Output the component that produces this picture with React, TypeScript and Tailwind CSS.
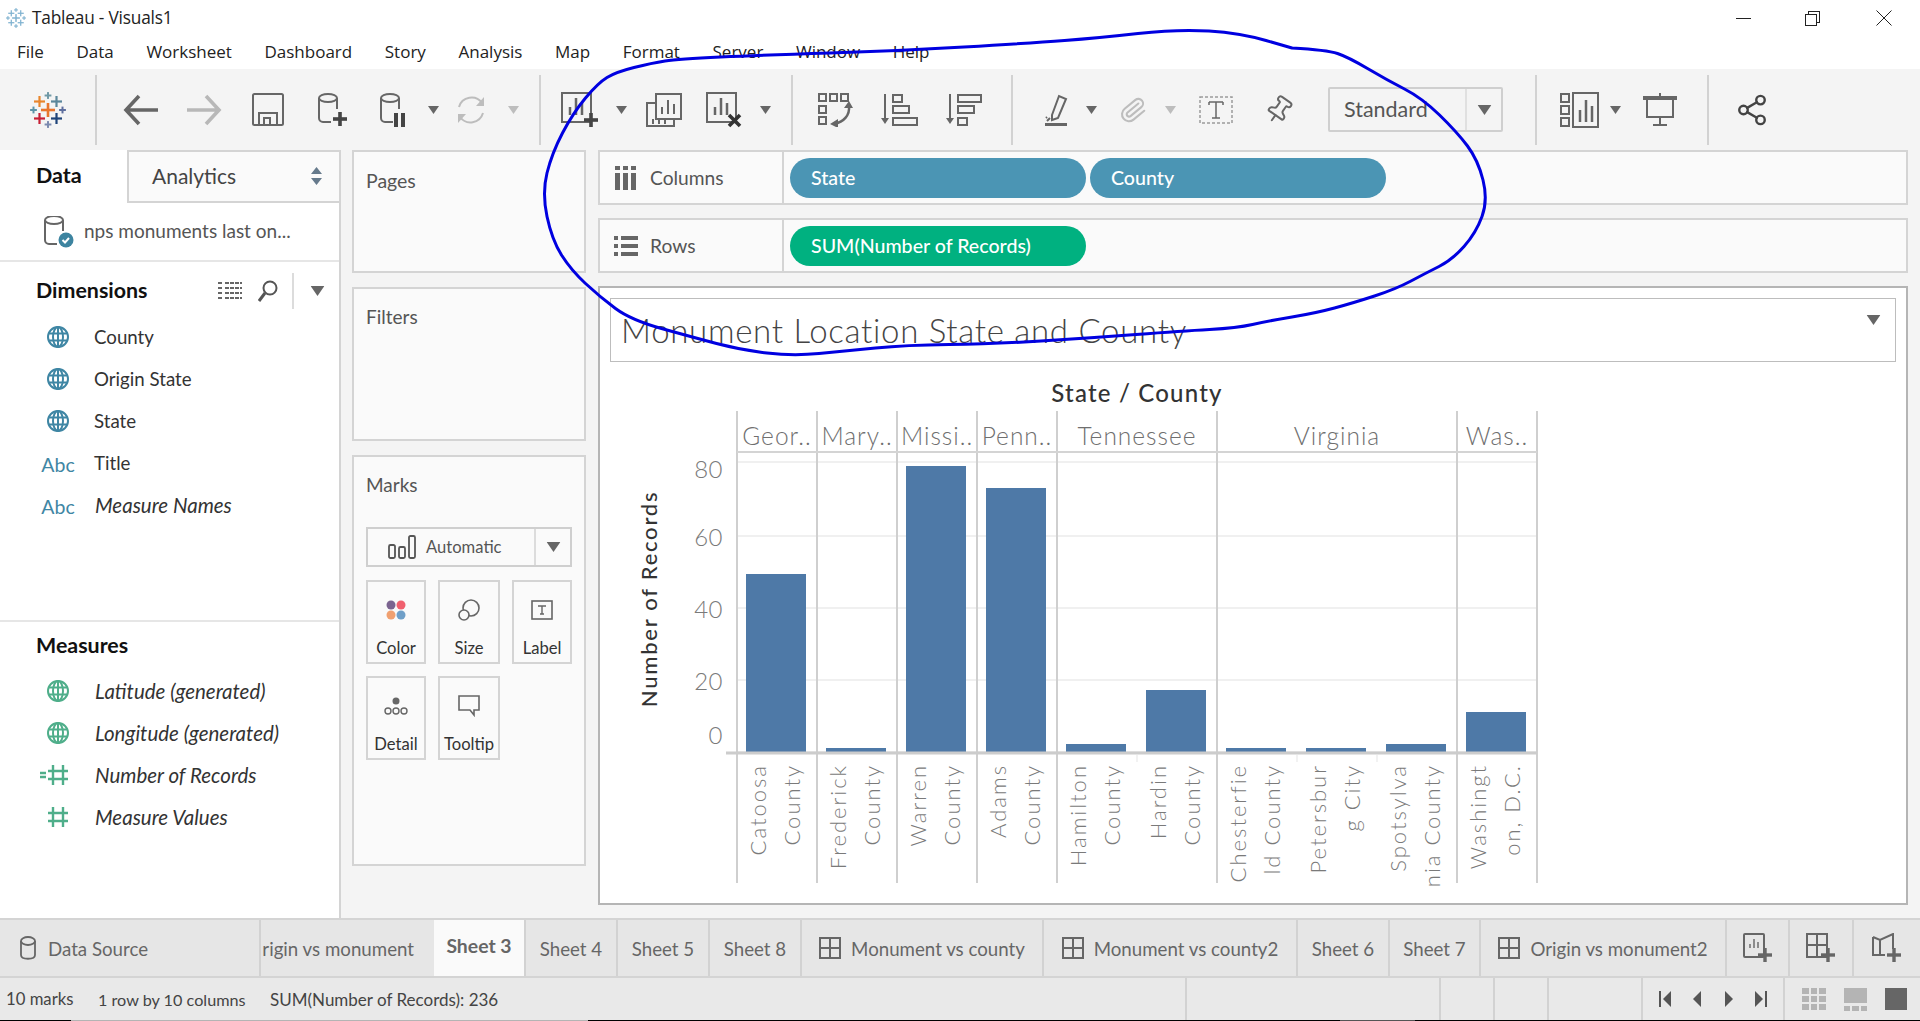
import { Paperclip, Pin, Share2 } from "lucide-react";
import type { ReactNode } from "react";

const GRAY = "#666666";

// pixel sized svg box, coordinates inside are plain pixels
function Ico({ w, h, children, stroke = GRAY, sw = 2 }: { w: number; h: number; children: ReactNode; stroke?: string; sw?: number }) {
  return (
    <svg width={w} height={h} viewBox={`0 0 ${w} ${h}`} fill="none" stroke={stroke} strokeWidth={sw} className="shrink-0 block">
      {children}
    </svg>
  );
}

function Caret({ light, className }: { light?: boolean; className: string }) {
  return (
    <svg width="11" height="8" viewBox="0 0 11 8" className={`shrink-0 block ${className}`}>
      <path d="M0 0h11L5.5 8z" fill={light ? "#bdbdbd" : GRAY} />
    </svg>
  );
}

function Sep({ className }: { className: string }) {
  return <div className={`w-[2px] h-[70px] bg-[#d2d2d2] shrink-0 ${className}`} />;
}

function Cross({ x, y, r, t, color }: { x: number; y: number; r: number; t: number; color: string }) {
  return (
    <g fill={color} stroke="none">
      <rect x={x - r} y={y - t / 2} width={r * 2} height={t} />
      <rect x={x - t / 2} y={y - r} width={t} height={r * 2} />
    </g>
  );
}

function Logo({ size, mono }: { size: number; mono?: boolean }) {
  const c = (v: string) => (mono ? "#7fb2d0" : v);
  return (
    <svg width={size} height={size} viewBox="0 0 36 36" className="shrink-0 block">
      <Cross x={18} y={18} r={7} t={2.6} color={c("#e8762d")} />
      <Cross x={9.5} y={9.5} r={5.5} t={2.2} color={c("#e8862d")} />
      <Cross x={26.5} y={9.5} r={5.5} t={2.2} color={c("#5b879b")} />
      <Cross x={9.5} y={26.5} r={5.5} t={2.2} color={c("#c72035")} />
      <Cross x={26.5} y={26.5} r={5.5} t={2.2} color={c("#1f447a")} />
      <Cross x={18} y={3.5} r={3.4} t={2} color={c("#7099a6")} />
      <Cross x={18} y={32.5} r={3.4} t={2} color={c("#7c8bb0")} />
      <Cross x={3.5} y={18} r={3.4} t={2} color={c("#5c94a8")} />
      <Cross x={32.5} y={18} r={3.4} t={2} color={c("#5e6f9e")} />
    </svg>
  );
}

function Cylinder({ x = 1, y = 5, color = GRAY }: { x?: number; y?: number; color?: string }) {
  return (
    <g stroke={color} transform={`translate(${x} ${y})`}>
      <ellipse cx="9" cy="3" rx="9" ry="4" />
      <path d="M0 3v20a4 4 0 0 0 4 4h8M18 3v11" />
    </g>
  );
}

function Globe({ color }: { color: string }) {
  return (
    <Ico w={24} h={24} stroke={color} sw={2}>
      <circle cx="12" cy="12" r="10" />
      <ellipse cx="12" cy="12" rx="5" ry="10" />
      <path d="M2.5 8.5h19M2.5 15.5h19M12 2v20" />
    </Ico>
  );
}

function Hash({ color, eq }: { color: string; eq?: boolean }) {
  return (
    <div className="relative -left-[4px]">
      <Ico w={28} h={24} stroke={color} sw={2.4}>
        {eq && <path d="M0 10h6M0 14h6" />}
        <path d="M8 8h20M8 16h20M13 2v20M23 2v20" />
      </Ico>
    </div>
  );
}

function AddSheet({ kind }: { kind: "sheet" | "dash" | "story" }) {
  return (
    <Ico w={30} h={30}>
      {kind === "sheet" && (
        <>
          <rect x="1" y="1" width="20" height="23" rx="1" />
          <path d="M7 15v-4M11 15V6M15 15v-6" strokeWidth="1.400" />
        </>
      )}
      {kind === "dash" && (
        <path d="M1 1h20v23H1zM1 12h20M11 1v23" />
      )}
      {kind === "story" && <path d="M1 4l7 3 13-6v15M1 4v18h12M8 7v15" />}
      <Cross x={22} y={22} r={7} t={3.4} color={GRAY} />
    </Ico>
  );
}

function Toolbar() {
  return (
    <div className="h-[81px] bg-[#f4f4f4] flex items-center shrink-0">
      <div className="ml-[30px]"><Logo size={36} /></div>
      <Sep className="ml-[29px]" />
      <div className="ml-[26px]">
        <Ico w={35} h={32} sw={3.6}><path d="M16 2L3 16l13 14M3 16h32" /></Ico>
      </div>
      <div className="ml-[29px]">
        <Ico w={35} h={32} sw={3.6} stroke="#b8b8b8"><path d="M19 2l13 14-13 14M32 16H0" /></Ico>
      </div>
      <div className="ml-[30px]">
        <Ico w={32} h={33}>
          <rect x="1" y="1" width="30" height="31" rx="1.500" />
          <path d="M7 32V20h18v12M12 32v-7h6v7" />
        </Ico>
      </div>
      <div className="ml-[34px]">
        <Ico w={30} h={34}>
          <Cylinder y={2} />
          <Cross x={22} y={26} r={7} t={3.6} color="#444444" />
        </Ico>
      </div>
      <div className="ml-[32px]">
        <Ico w={26} h={34}>
          <Cylinder y={2} />
          <rect x="14" y="20" width="4" height="14" fill="#444444" stroke="none" />
          <rect x="21" y="20" width="4" height="14" fill="#444444" stroke="none" />
        </Ico>
      </div>
      <Caret className="ml-[22px]" />
      <div className="ml-[16px]">
        <Ico w={32} h={32} stroke="#bdbdbd">
          <path d="M4 13A13 13 0 0 1 27 9M28 19A13 13 0 0 1 5 23" />
          <path d="M29 3v9h-8z" fill="#bdbdbd" stroke="none" />
          <path d="M3 29v-9h8z" fill="#bdbdbd" stroke="none" />
        </Ico>
      </div>
      <Caret light className="ml-[21px]" />
      <Sep className="ml-[20px]" />
      <div className="ml-[20px]">
        <Ico w={38} h={36}>
          <rect x="1" y="1" width="29" height="29" />
          <path d="M9 23v-8M15 23V6M21 23V11" strokeWidth="2.500" />
          <Cross x={30} y={28} r={7} t={3.6} color="#444444" />
        </Ico>
      </div>
      <Caret className="ml-[17px]" />
      <div className="ml-[19px]">
        <Ico w={36} h={34}>
          <path d="M10 10H1v23h27v-7" />
          <rect x="10" y="1" width="25" height="25" fill="#f4f4f4" />
          <path d="M16 21v-7M22 21V7M28 21V11M7 31v-5M13 31v-5M19 31v-5" strokeWidth="2" />
        </Ico>
      </div>
      <div className="ml-[24px]">
        <Ico w={37} h={36}>
          <rect x="1" y="1" width="29" height="29" />
          <path d="M9 23v-8M15 23V6M21 23V11" strokeWidth="2.500" />
          <path d="M23 23l11 11M34 23L23 34" stroke="#333333" strokeWidth="3.600" />
        </Ico>
      </div>
      <Caret className="ml-[17px]" />
      <Sep className="ml-[20px]" />
      <div className="ml-[25px]">
        <Ico w={36} h={34}>
          <rect x="1" y="1" width="7" height="7" />
          <rect x="12" y="1" width="7" height="7" />
          <rect x="23" y="1" width="7" height="7" />
          <rect x="1" y="13" width="7" height="7" />
          <rect x="1" y="24" width="7" height="7" />
          <path d="M31 13c1 9-5 16-15 18" strokeWidth="2.500" />
          <path d="M31 8l-5 7h9zM12 31l8-5v9z" fill={GRAY} stroke="none" />
        </Ico>
      </div>
      <div className="ml-[27px]">
        <Ico w={37} h={32}>
          <path d="M4 0v27" />
          <path d="M0 24h8l-4 6z" fill={GRAY} stroke="none" />
          <rect x="12" y="1" width="9" height="7" />
          <rect x="12" y="12" width="16" height="7" />
          <rect x="12" y="24" width="24" height="7" />
        </Ico>
      </div>
      <div className="ml-[28px]">
        <Ico w={36} h={32}>
          <path d="M4 0v27" />
          <path d="M0 24h8l-4 6z" fill={GRAY} stroke="none" />
          <rect x="12" y="1" width="23" height="7" />
          <rect x="12" y="12" width="16" height="7" />
          <rect x="12" y="24" width="9" height="7" />
        </Ico>
      </div>
      <Sep className="ml-[29px]" />
      <div className="ml-[32px]">
        <Ico w={23} h={34}>
          <path d="M7 22L14 3l7 3-8 19-6 2z" />
          <path d="M5 25l-3 3M2 24l-1 1" />
          <rect x="0" y="30" width="22" height="3" fill={GRAY} stroke="none" />
        </Ico>
      </div>
      <Caret className="ml-[18px]" />
      <Paperclip className="ml-[22px] shrink-0 rotate-[6deg]" size={28} color="#bdbdbd" strokeWidth={1.8} />
      <Caret light className="ml-[18px]" />
      <div className="ml-[23px]">
        <Ico w={34} h={28} sw={1.500} stroke="#9a9a9a">
          <rect x="1" y="1" width="32" height="26" strokeDasharray="3 2" />
          <path d="M10 6h14M17 6v16M13 22h8M10 6v3M24 6v3" stroke="#666666" />
        </Ico>
      </div>
      <Pin className="ml-[31px] shrink-0 rotate-[35deg]" size={30} color={GRAY} strokeWidth={1.6} />
      <div className="ml-[34px] w-[175px] h-[45px] border-2 border-[#cfcfcf] rounded-[2px] flex items-center shrink-0">
        <span className="flex-1 pl-[14px] text-[21.500px] text-[#555555]">Standard</span>
        <div className="w-[36px] h-full border-l-2 border-[#e0e0e0] flex items-center justify-center">
          <Caret className="scale-125" />
        </div>
      </div>
      <Sep className="ml-[32px]" />
      <div className="ml-[23px]">
        <Ico w={40} h={36}>
          <rect x="1" y="2" width="8" height="8" />
          <rect x="1" y="14" width="8" height="8" />
          <rect x="1" y="26" width="8" height="8" />
          <rect x="13" y="1" width="25" height="34" />
          <path d="M20 30V18M26 30V8M32 30V14" strokeWidth="2.500" />
        </Ico>
      </div>
      <Caret className="ml-[10px]" />
      <div className="ml-[22px]">
        <Ico w={34} h={34}>
          <path d="M17 0v5" />
          <rect x="0" y="3" width="34" height="4" fill={GRAY} stroke="none" />
          <path d="M4 6v18h26V6M17 24v8M10 32h14" />
        </Ico>
      </div>
      <Sep className="ml-[30px]" />
      <Share2 className="ml-[26px] shrink-0" size={34} color="#444444" strokeWidth={1.7} />
    </div>
  );
}

function FieldRow({ icon, label, italic }: { icon: ReactNode; label: string; italic?: boolean }) {
  return (
    <div className="h-[42px] flex items-center">
      <div className="w-[94px] pl-[40px] flex items-center justify-center shrink-0 pr-[18px]">{icon}</div>
      <span className={italic ? "text-[20.500px] italic text-[#333333] ml-[1px]" : "text-[18.700px] text-[#333333]"}>{label}</span>
    </div>
  );
}

const abc = <span className="text-[19.500px] text-[#3f86a4] relative top-[2px]">Abc</span>;

function DataPane() {
  return (
    <div className="w-[341px] shrink-0 bg-white border-r-2 border-[#d4d4d4] flex flex-col">
      <div className="flex h-[53px] shrink-0">
        <div className="w-[127px] pl-[36px] pb-[2px] flex items-center font-bold text-[21.500px] text-[#111111]">Data</div>
        <div className="flex-1 bg-[#fafafa] border-t-2 border-l-2 border-b-2 border-[#d4d4d4] pl-[23px] pb-[2px] flex items-center justify-between pr-[17px] text-[21px] text-[#444444]">
          Analytics
          <svg width="11" height="18" viewBox="0 0 11 18"><path d="M0 7l5.500-7L11 7zM0 11l5.500 7L11 11z" fill="#667a8c" /></svg>
        </div>
      </div>
      <div className="h-[59px] shrink-0 border-b-2 border-[#e6e6e6] flex items-center pl-[44px] gap-[10px]">
        <Ico w={30} h={32} stroke="#666666">
          <Cylinder x={1} y={1} />
          <circle cx="22" cy="24" r="7.500" fill="#3d84a0" stroke="none" />
          <path d="M18.500 24l2.500 2.500 4-4.500" stroke="#ffffff" />
        </Ico>
        <span className="text-[19px] text-[#555555]">nps monuments last on...</span>
      </div>
      <div className="h-[360px] shrink-0 border-b-2 border-[#e6e6e6]">
        <div className="h-[54px] flex items-center pl-[36px] pt-[3px]">
          <span className="font-bold text-[21.400px] text-[#111111] w-[182px]">Dimensions</span>
          <Ico w={24} h={20} stroke="#666666" sw={2}>
            <path d="M0 2h5M7 2h17M0 7h5M7 7h17M0 12h5M7 12h17M0 17h5M7 17h17" strokeDasharray="4 1" />
          </Ico>
          <div className="ml-[16px]">
            <Ico w={20} h={22} stroke="#555555">
              <circle cx="12" cy="8" r="6.500" />
              <path d="M7 13l-6 8" strokeWidth="3" />
            </Ico>
          </div>
          <div className="ml-[14px] w-[2px] h-[36px] bg-[#dcdcdc]" />
          <Caret className="ml-[18px] scale-125" />
        </div>
        <FieldRow icon={<Globe color="#3f86a4" />} label="County" />
        <FieldRow icon={<Globe color="#3f86a4" />} label="Origin State" />
        <FieldRow icon={<Globe color="#3f86a4" />} label="State" />
        <FieldRow icon={abc} label="Title" />
        <FieldRow icon={abc} label="Measure Names" italic />
      </div>
      <div className="h-[46px] flex items-center pl-[36px] font-bold text-[21.400px] text-[#111111]">Measures</div>
      <div className="pt-[2px]">
        <FieldRow icon={<Globe color="#4fae8a" />} label="Latitude (generated)" italic />
        <FieldRow icon={<Globe color="#4fae8a" />} label="Longitude (generated)" italic />
        <FieldRow icon={<Hash color="#4fae8a" eq />} label="Number of Records" italic />
        <FieldRow icon={<Hash color="#4fae8a" />} label="Measure Values" italic />
      </div>
    </div>
  );
}

function MarkButton({ label, icon, width }: { label: string; icon: ReactNode; width: string }) {
  return (
    <div className={`${width} h-[84px] border-2 border-[#d4d4d4] flex flex-col items-center shrink-0`}>
      <div className="h-[56px] flex items-center justify-center">{icon}</div>
      <span className="text-[16.600px] text-[#333333] leading-[20px]">{label}</span>
    </div>
  );
}

function CardsColumn() {
  return (
    <div className="ml-[11px] w-[234px] shrink-0 flex flex-col gap-[14px]">
      <div className="h-[123px] shrink-0 bg-[#fafafa] border-2 border-[#d4d4d4] px-[12px] pt-[17px] text-[19.500px] leading-[24px] text-[#555555]">Pages</div>
      <div className="h-[154px] shrink-0 bg-[#fafafa] border-2 border-[#d4d4d4] px-[12px] pt-[16px] text-[19px] leading-[24px] text-[#555555]">Filters</div>
      <div className="h-[411px] shrink-0 bg-[#fafafa] border-2 border-[#d4d4d4] px-[12px] pt-[16px]">
        <div className="text-[19px] leading-[24px] text-[#555555]">Marks</div>
        <div className="mt-[30px] w-[206px] h-[40px] border-2 border-[#cfcfcf] flex items-center">
          <div className="flex-1 flex items-center pl-[20px] gap-[10px]">
            <Ico w={28} h={24} sw={1.800} stroke="#555555">
              <rect x="1" y="10" width="6" height="13" rx="1.500" />
              <rect x="11" y="12" width="6" height="11" rx="1.500" />
              <rect x="21" y="1" width="6" height="22" rx="1.500" />
            </Ico>
            <span className="text-[16.600px] text-[#555555]">Automatic</span>
          </div>
          <div className="w-[36px] h-full border-l-2 border-[#dcdcdc] flex items-center justify-center">
            <Caret className="scale-125" />
          </div>
        </div>
        <div className="mt-[13px] flex gap-[12px]">
          <MarkButton width="w-[60px]" label="Color" icon={
            <Ico w={20} h={20} sw={0}>
              <circle cx="5" cy="5" r="4.500" fill="#7b6490" />
              <circle cx="15" cy="5" r="4.500" fill="#f0606e" />
              <circle cx="5" cy="15" r="4.500" fill="#f0a070" />
              <circle cx="15" cy="15" r="4.500" fill="#6f9fc8" />
            </Ico>
          } />
          <MarkButton width="w-[62px]" label="Size" icon={
            <Ico w={22} h={22} sw={1.600} stroke="#666666">
              <circle cx="13" cy="9" r="8" />
              <circle cx="6" cy="16" r="5" fill="#fafafa" />
            </Ico>
          } />
          <MarkButton width="w-[60px]" label="Label" icon={
            <Ico w={22} h={20} sw={1.600} stroke="#666666">
              <rect x="1" y="1" width="20" height="18" />
              <path d="M7 6h8M11 6v8M9 14h4" strokeWidth="1.400" />
            </Ico>
          } />
        </div>
        <div className="mt-[12px] flex gap-[12px]">
          <MarkButton width="w-[60px]" label="Detail" icon={
            <Ico w={24} h={20} sw={1.400} stroke="#666666">
              <circle cx="12" cy="5" r="3.500" fill="#666666" stroke="none" />
              <circle cx="4" cy="15" r="3" />
              <circle cx="12" cy="15" r="3" />
              <circle cx="20" cy="15" r="3" />
            </Ico>
          } />
          <MarkButton width="w-[62px]" label="Tooltip" icon={
            <Ico w={22} h={22} sw={1.600} stroke="#666666">
              <path d="M1 1h20v14h-5v5l-4-5H1z" />
            </Ico>
          } />
        </div>
      </div>
    </div>
  );
}

function Shelf({ icon, label, children }: { icon: ReactNode; label: string; children: ReactNode }) {
  return (
    <div className="h-[55px] shrink-0 bg-[#fafafa] border-2 border-[#d4d4d4] flex">
      <div className="w-[184px] shrink-0 border-r-2 border-[#d4d4d4] flex items-center pl-[14px] gap-[12px]">
        <div className="w-[24px] flex justify-center">{icon}</div>
        <span className="text-[19.200px] text-[#555555] relative top-[1px]">{label}</span>
      </div>
      <div className="flex items-center pl-[6px] gap-[4px]">{children}</div>
    </div>
  );
}

function Pill({ label, green }: { label: string; green?: boolean }) {
  return (
    <div className={`w-[296px] h-[40px] rounded-[20px] flex items-center pl-[21px] text-[19.600px] font-medium text-white ${green ? "bg-[#00b180]" : "bg-[#4b95b4]"}`}>
      {label}
    </div>
  );
}

const cells = [
  { x: 737, w: 80, label: "Geor.." },
  { x: 817, w: 80, label: "Mary.." },
  { x: 897, w: 80, label: "Missi.." },
  { x: 977, w: 80, label: "Penn.." },
  { x: 1057, w: 160, label: "Tennessee" },
  { x: 1217, w: 240, label: "Virginia" },
  { x: 1457, w: 80, label: "Was.." },
];

const bars = [
  { top: 574, a: "Catoosa", b: "County" },
  { top: 748, a: "Frederick", b: "County" },
  { top: 466, a: "Warren", b: "County" },
  { top: 488, a: "Adams", b: "County" },
  { top: 744, a: "Hamilton", b: "County" },
  { top: 690, a: "Hardin", b: "County" },
  { top: 748, a: "Chesterfie", b: "ld County" },
  { top: 748, a: "Petersbur", b: "g City" },
  { top: 744, a: "Spotsylva", b: "nia County" },
  { top: 712, a: "Washingt", b: "on, D.C." },
];

const dividers = [737, 817, 897, 977, 1057, 1217, 1457, 1537];
const axis = [
  { v: "80", grid: 462, y: 478 },
  { v: "60", grid: 536, y: 546 },
  { v: "40", grid: 608, y: 618 },
  { v: "20", grid: 680, y: 690 },
  { v: "0", grid: 752, y: 744 },
];

// drawn in page pixels, the viewBox starts where the svg sits on the page
function Chart() {
  return (
    <svg width="1306" height="538" viewBox="600 364 1306 538" className="block font-['Lato',sans-serif]">
      <text x="1137" y="402" textAnchor="middle" fontSize="24" fontWeight="500" fill="#333333" letterSpacing="1.200">State / County</text>
      <text transform="translate(657 599) rotate(-90)" textAnchor="middle" fontSize="22" fontWeight="500" fill="#333333" letterSpacing="1.750">Number of Records</text>
      {axis.map((a) => (
        <g key={a.v}>
          <line x1="737" x2="1537" y1={a.grid} y2={a.grid} stroke="#f0f0f0" strokeWidth="2" />
          <text x="723" y={a.y} textAnchor="end" fontSize="24" fontWeight="300" fill="#7a7a7a" letterSpacing="0.500">{a.v}</text>
        </g>
      ))}
      {dividers.map((x) => (
        <line key={x} x1={x} x2={x} y1="411" y2="883" stroke="#cfcfcf" strokeWidth="2" />
      ))}
      <line x1="737" x2="1537" y1="452" y2="452" stroke="#d4d4d4" strokeWidth="2" />
      {cells.map((c) => (
        <text key={c.label} x={c.x + c.w / 2} y="445" textAnchor="middle" fontSize="24.500" fontWeight="300" fill="#6f6f6f" letterSpacing="1">{c.label}</text>
      ))}
      {bars.map((b, i) => {
        const x = 737 + i * 80;
        return (
          <g key={b.a}>
            <rect x={x + 9} y={b.top} width="60" height={752 - b.top} fill="#4e79a7" />
            <text transform={`translate(${x + 29} 764) rotate(-90)`} textAnchor="end" fontSize="22" fontWeight="300" fill="#7a7a7a" letterSpacing="2">{b.a}</text>
            <text transform={`translate(${x + 63} 764) rotate(-90)`} textAnchor="end" fontSize="22" fontWeight="300" fill="#7a7a7a" letterSpacing="2">{b.b}</text>
          </g>
        );
      })}
      <line x1="726" x2="1537" y1="753" y2="753" stroke="#cccccc" strokeWidth="3" />
      {[1137, 1297, 1377].map((x) => (
        <line key={x} x1={x} x2={x} y1="755" y2="762" stroke="#eeeeee" strokeWidth="1.500" />
      ))}
    </svg>
  );
}

function ViewColumn() {
  return (
    <div className="ml-[12px] w-[1310px] shrink-0 flex flex-col">
      <Shelf label="Columns" icon={
        <Ico w={22} h={24} stroke="#666666" sw={0}>
          <g fill="#666666">
            <rect x="0" y="0" width="5" height="4" />
            <rect x="8" y="0" width="5" height="4" />
            <rect x="16" y="0" width="5" height="4" />
            <rect x="0" y="7" width="5" height="17" />
            <rect x="8" y="7" width="5" height="17" />
            <rect x="16" y="7" width="5" height="17" />
          </g>
        </Ico>
      }>
        <Pill label="State" />
        <Pill label="County" />
      </Shelf>
      <div className="h-[13px] shrink-0" />
      <Shelf label="Rows" icon={
        <Ico w={24} h={20} sw={0}>
          <g fill="#666666">
            <rect x="0" y="0" width="4" height="4" />
            <rect x="7" y="0" width="17" height="4" />
            <rect x="0" y="8" width="4" height="4" />
            <rect x="7" y="8" width="17" height="4" />
            <rect x="0" y="16" width="4" height="4" />
            <rect x="7" y="16" width="17" height="4" />
          </g>
        </Ico>
      }>
        <Pill label="SUM(Number of Records)" green />
      </Shelf>
      <div className="h-[13px] shrink-0" />
      <div className="h-[619px] shrink-0 bg-white border-2 border-[#b5b5b5] pt-[10px] pl-[10px]">
        <div className="w-[1286px] h-[64px] border border-[#bdbdbd] flex items-center justify-between pl-[10px] pr-[16px]">
          <span className="text-[33px] font-light tracking-[0.700px] text-[#444444] relative top-[1px]">Monument Location State and County</span>
          <Caret className="scale-125 relative top-[-10px]" />
        </div>
        <div className="-ml-[10px] mt-[2px]"><Chart /></div>
      </div>
    </div>
  );
}

function Tab({ width, label, active, dash, children }: { width: string; label?: string; active?: boolean; dash?: boolean; children?: ReactNode }) {
  return (
    <div className={`${width} shrink-0 h-full flex items-center justify-center gap-[10px] border-r-2 border-[#d2d2d2] text-[#666666] ${active ? "bg-[#fafafa] font-bold text-[19.400px]" : "text-[18.700px]"}`}>
      {dash && (
        <Ico w={22} h={22} stroke="#666666">
          <path d="M1 1h20v20H1zM1 11h20M11 1v20" />
        </Ico>
      )}
      {label && <span className={active ? "relative top-[-2px]" : "relative top-[1px]"}>{label}</span>}
      {children}
    </div>
  );
}

function NavArrow({ d }: { d: string }) {
  return (
    <svg width="12" height="16" viewBox="0 0 12 16" className="shrink-0 block"><path d={d} fill="#555555" /></svg>
  );
}

function Bottom() {
  return (
    <>
      <div className="h-[60px] shrink-0 bg-[#e6e6e6] border-t-2 border-[#d4d4d4] border-b-2 flex">
        <div className="w-[261px] shrink-0 h-full border-r-2 border-[#d2d2d2] flex items-center pl-[20px] gap-[12px] text-[18.700px] text-[#666666]">
          <Ico w={16} h={24} sw={1.800}>
            <ellipse cx="8" cy="5" rx="7" ry="4" />
            <path d="M1 5v14c0 5 14 5 14 0V5" />
          </Ico>
          <span className="relative top-[1px]">Data Source</span>
        </div>
        <div className="w-[173px] shrink-0 h-full overflow-hidden flex items-center justify-end pr-[20px] text-[18.700px] text-[#666666]">
          <span className="whitespace-nowrap relative top-[1px]">rigin vs monument</span>
        </div>
        <Tab width="w-[92px]" label="Sheet 3" active />
        <Tab width="w-[92px]" label="Sheet 4" />
        <Tab width="w-[92px]" label="Sheet 5" />
        <Tab width="w-[92px]" label="Sheet 8" />
        <Tab width="w-[242px]" label="Monument vs county" dash />
        <Tab width="w-[254px]" label="Monument vs county2" dash />
        <Tab width="w-[92px]" label="Sheet 6" />
        <Tab width="w-[91px]" label="Sheet 7" />
        <Tab width="w-[246px]" label="Origin vs monument2" dash />
        <Tab width="w-[63px]"><AddSheet kind="sheet" /></Tab>
        <Tab width="w-[64px]"><AddSheet kind="dash" /></Tab>
        <div className="flex-1 flex items-center justify-center"><AddSheet kind="story" /></div>
      </div>
      <div className="h-[42px] shrink-0 bg-[#e9e9e9] flex items-center text-[16.700px] text-[#444444]">
        <div className="w-[1187px] flex items-center pl-[6px] pt-[2px] shrink-0 h-full border-r-2 border-[#d2d2d2]">
          <span className="w-[92px]">10 marks</span>
          <span className="w-[172px] text-[16.200px]">1 row by 10 columns</span>
          <span className="text-[17px]">SUM(Number of Records): 236</span>
        </div>
        <div className="w-[254px] shrink-0 h-full border-r-2 border-[#d2d2d2]" />
        <div className="w-[54px] shrink-0 h-full border-r-2 border-[#d2d2d2]" />
        <div className="w-[54px] shrink-0 h-full border-r-2 border-[#d2d2d2]" />
        <div className="w-[94px] shrink-0 h-full border-r-2 border-[#d2d2d2]" />
        <div className="w-[142px] shrink-0 h-full border-r-2 border-[#d2d2d2] flex items-center pl-[16px] gap-[20px]">
          <NavArrow d="M0 0h2v16H0zM12 0v16L4 8z" />
          <NavArrow d="M10 0v16L2 8z" />
          <NavArrow d="M2 0v16l8-8z" />
          <NavArrow d="M0 0v16l8-8zM10 0h2v16h-2z" />
        </div>
        <div className="flex-1 flex items-center pl-[17px] gap-[18px]">
          <div className="grid grid-cols-3 gap-[2px] w-[24px]">
            {Array.from({ length: 9 }).map((_, i) => (
              <div key={i} className="h-[6px] bg-[#b4b4b4]" />
            ))}
          </div>
          <div className="w-[23px] flex flex-col gap-[3px]">
            <div className="h-[15px] bg-[#b4b4b4]" />
            <div className="grid grid-cols-3 gap-[2px]">
              <div className="h-[5px] bg-[#b4b4b4]" />
              <div className="h-[5px] bg-[#b4b4b4]" />
              <div className="h-[5px] bg-[#b4b4b4]" />
            </div>
          </div>
          <div className="w-[22px] h-[22px] bg-[#666666]" />
        </div>
      </div>
      {/* window edge left in the screenshot, part black, part taskbar gray */}
      <div className="h-[1px] shrink-0 flex">
        <div className="w-[71px] bg-black" />
        <div className="w-[517px] bg-[#b4b4b4]" />
        <div className="w-[752px] bg-black" />
        <div className="w-[75px] bg-[#555555]" />
        <div className="flex-1 bg-black" />
      </div>
    </>
  );
}

// the pen circle someone drew over the screenshot, page pixels
const scribble: [number, number][] = [
  [1292, 48], [1327, 50], [1348, 57], [1387, 80], [1422, 98], [1457, 132], [1478, 160], [1488, 200],
  [1476, 233], [1452, 260], [1426, 273], [1396, 289], [1353, 303], [1316, 313], [1268, 321], [1237, 328],
  [1182, 331], [1090, 338], [992, 344], [906, 345], [845, 351], [793, 356], [741, 350], [692, 337],
  [631, 320], [600, 297], [571, 270], [552, 240], [542, 193], [552, 153], [573, 113], [598, 83],
  [616, 72], [652, 63], [678, 59], [763, 55], [897, 51], [1031, 43], [1098, 38], [1178, 29], [1240, 33], [1292, 48],
];

function smooth(pts: [number, number][]) {
  let d = `M${pts[0][0]} ${pts[0][1]}`;
  for (let i = 1; i < pts.length - 1; i++) {
    const mx = (pts[i][0] + pts[i + 1][0]) / 2;
    const my = (pts[i][1] + pts[i + 1][1]) / 2;
    d += ` Q${pts[i][0]} ${pts[i][1]} ${mx} ${my}`;
  }
  const last = pts[pts.length - 1];
  return d + ` L${last[0]} ${last[1]}`;
}

export default function App() {
  return (
    <div className="relative w-[1920px] h-[1021px] overflow-hidden flex flex-col bg-white font-['Lato',sans-serif]">
      <div className="h-[36px] shrink-0 flex items-center pl-[6px] gap-[6px]">
        <Logo size={20} mono />
        <span className="text-[17.300px] text-[#222222] font-['Open_Sans',sans-serif] tracking-[-0.2px]">Tableau - Visuals1</span>
        <div className="ml-auto flex items-center">
          <div className="w-[15px] h-[1px] bg-[#222222]" />
          <div className="ml-[54px] relative w-[15px] h-[15px]">
            <div className="absolute left-[3px] top-0 w-[12px] h-[12px] border border-[#222222]" />
            <div className="absolute left-0 top-[3px] w-[12px] h-[12px] border border-[#222222] bg-white" />
          </div>
          <svg width="16" height="16" viewBox="0 0 16 16" className="ml-[56px] mr-[28px]">
            <path d="M0.500 0.500l15 15M15.500 0.500l-15 15" stroke="#222222" />
          </svg>
        </div>
      </div>
      <div className="h-[33px] shrink-0 flex items-center pl-[17px] pb-[1px] gap-[32.600px] text-[17px] text-[#222222] font-['Open_Sans',sans-serif]">
        {["File", "Data", "Worksheet", "Dashboard", "Story", "Analysis", "Map", "Format", "Server", "Window", "Help"].map((m) => (
          <span key={m}>{m}</span>
        ))}
      </div>
      <Toolbar />
      <div className="h-[768px] shrink-0 bg-[#f4f4f4] flex">
        <DataPane />
        <CardsColumn />
        <ViewColumn />
      </div>
      <Bottom />
      <svg width="1920" height="1021" viewBox="0 0 1920 1021" className="absolute inset-0 pointer-events-none">
        <path d={smooth(scribble)} fill="none" stroke="#0000e0" strokeWidth="3" strokeLinejoin="round" strokeLinecap="round" />
      </svg>
    </div>
  );
}
